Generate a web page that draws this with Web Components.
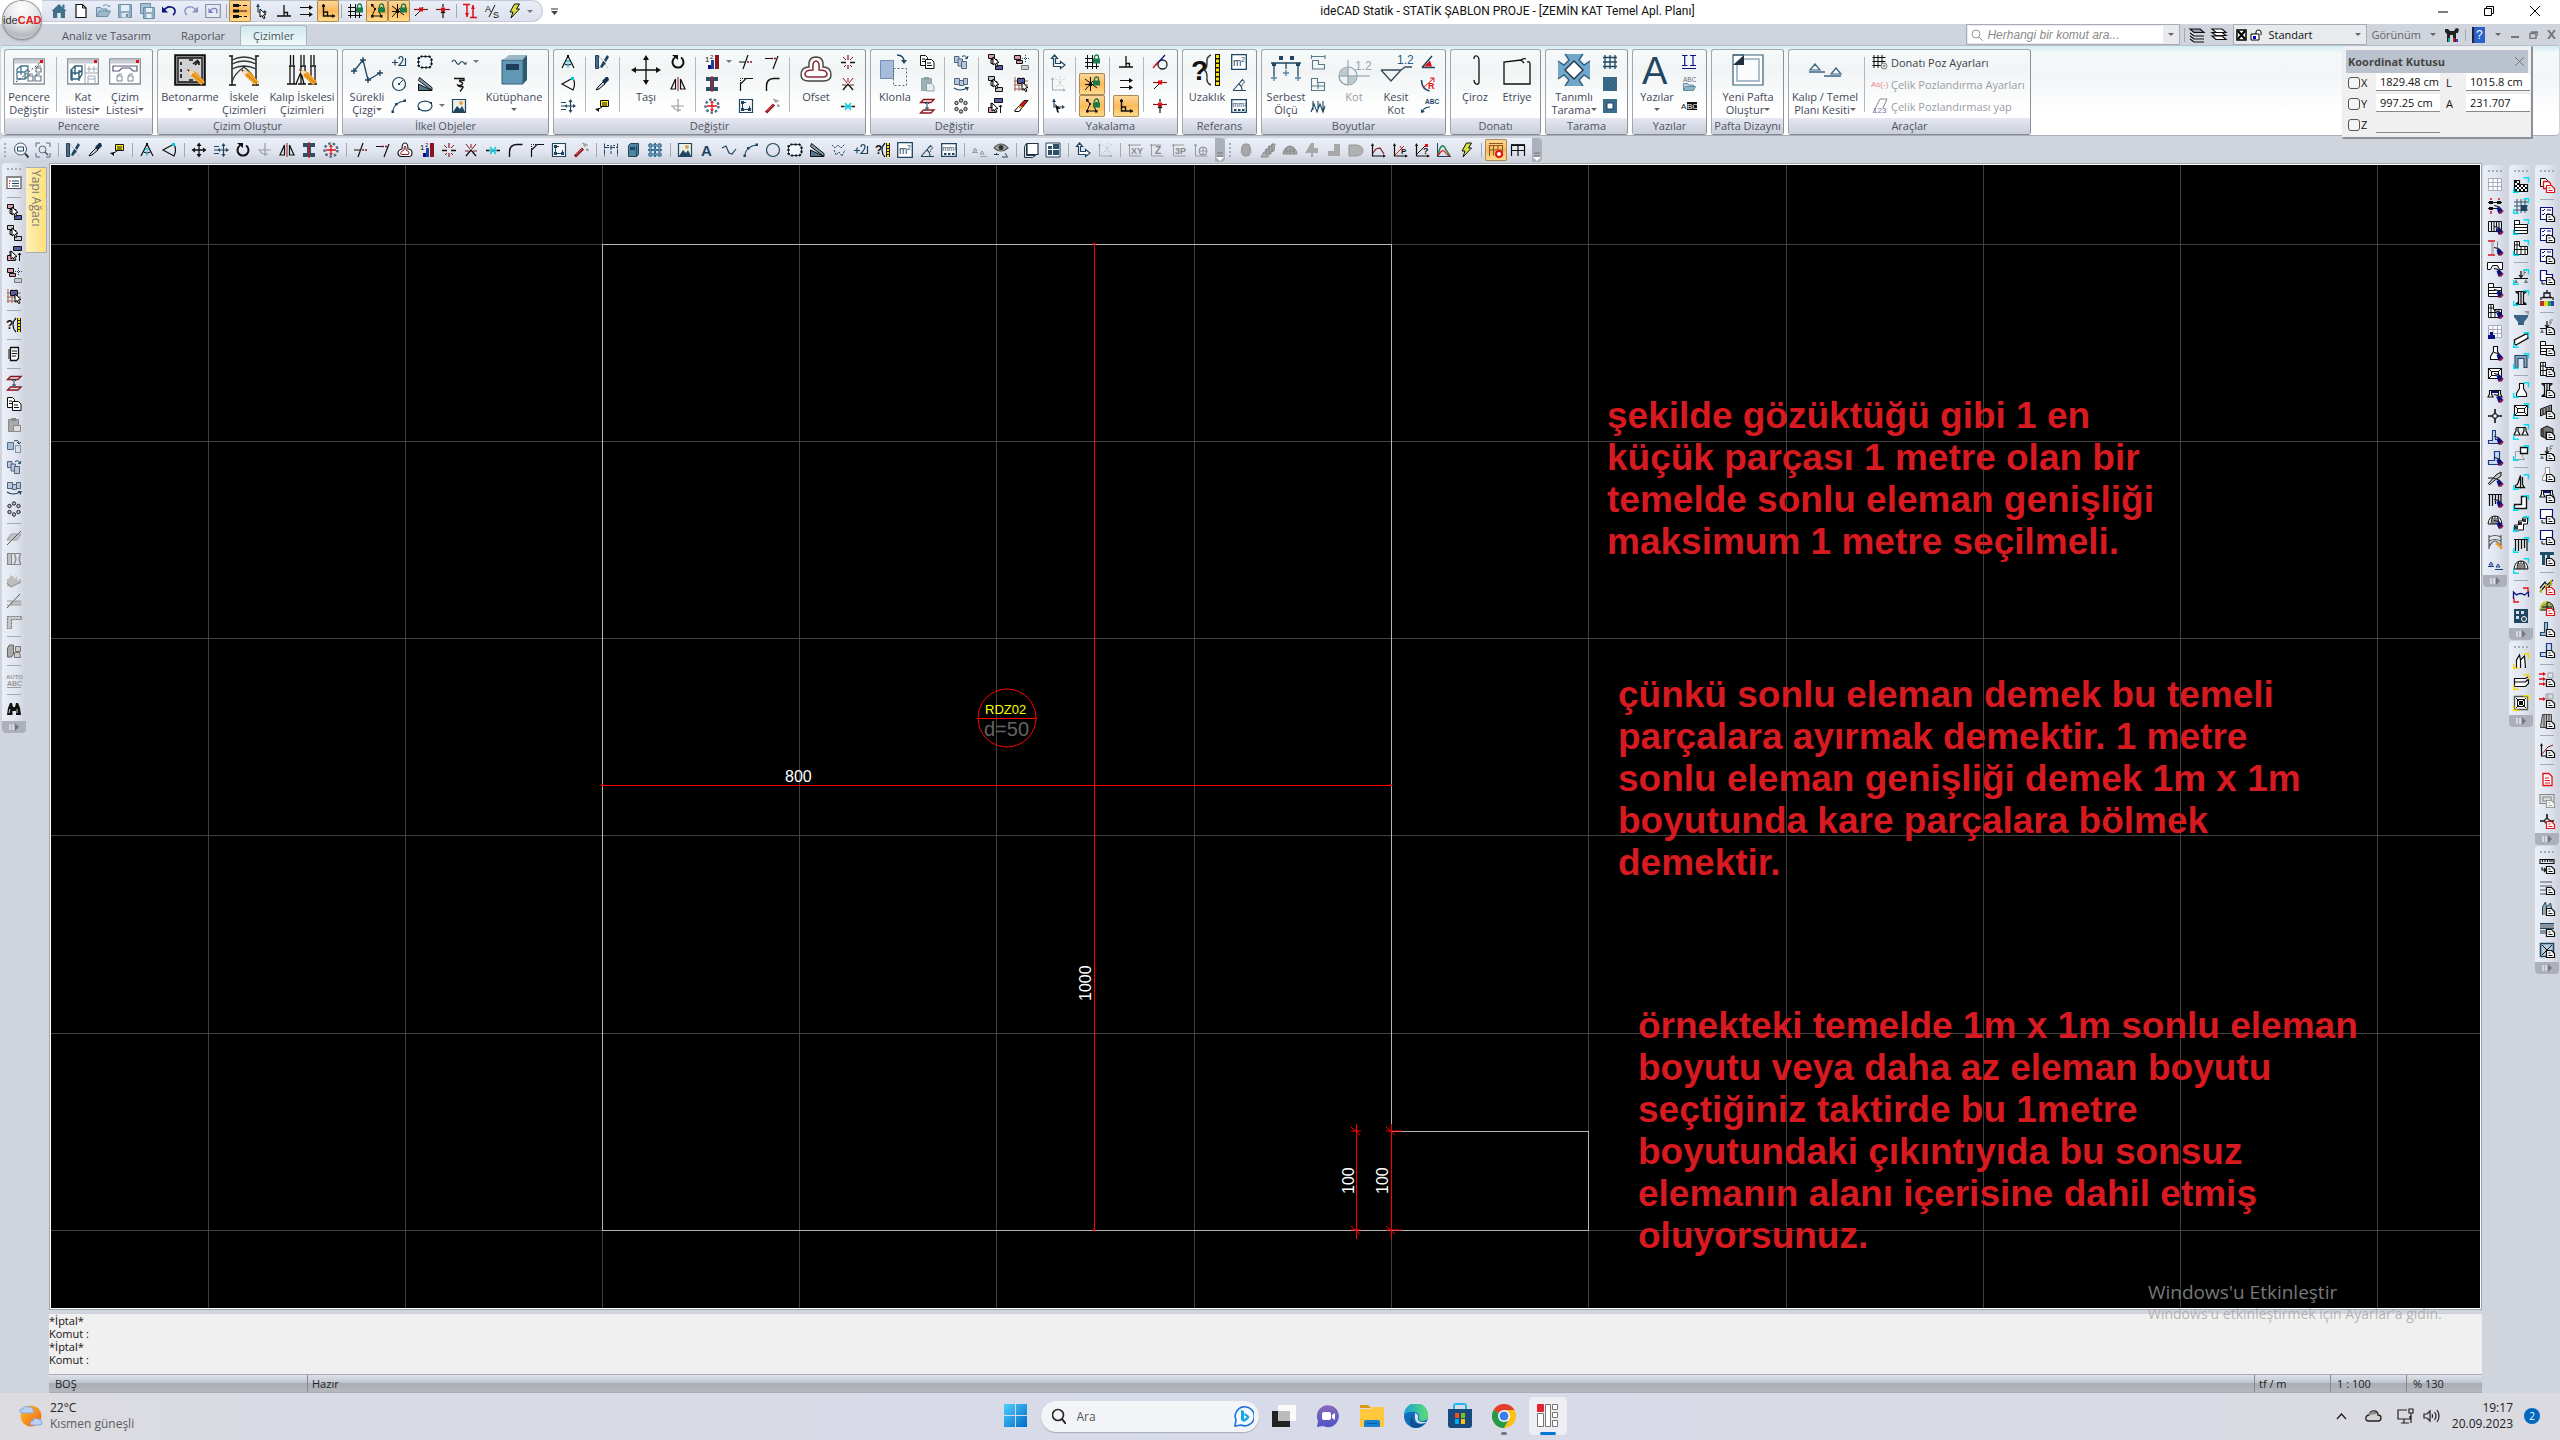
<!DOCTYPE html>
<html lang="tr">
<head>
<meta charset="utf-8">
<title>ideCAD Statik</title>
<style>
html,body{margin:0;height:100%}
body{font:11px/13px "Open Sans","Noto Sans",sans-serif;color:#3c3c46;overflow:hidden;background:#d0d4dd}
</style>
</head>
<body>
<cad-app></cad-app>
<script>
/* ---------- icon drawing helpers ---------- */
const N='#1f4560',K='#101010',R='#e01018',G='#9a9ca0',B='#0a1080',M='#8a1520',C='#00c8dc';
const p=(d,s=K,w=1,f='none')=>`<path d="${d}" stroke="${s}" stroke-width="${w}" fill="${f}"/>`;
const f=(d,c=K)=>`<path d="${d}" fill="${c}"/>`;
const t=(x,y,s,c,str,x2='')=>`<text x="${x}" y="${y}" font-size="${s}" fill="${c}" ${x2}>${str}</text>`;
const dash=(s,a='1 1')=>s.replace('/>',` stroke-dasharray="${a}"/>`);
const doc=(c=K)=>p('M7.500 8.500h5l3 3v4h-8z',c,1.200,'#fff')+p('M9.500 11h2M9.500 13.500h4',c);
const brush=()=>p('M7 7.500l4 1 2 3',K,1.200,'#fff')+f('M9.500 10l3-1.500 4 4.500-2 2.500h-3z',B)+p('M12 15.500l4-3',R,1.200);
const cy=(c='#00e0f0')=>p('M10.500.700h5v4.500M.700 11v4.300h5',c,1.400);
const lock=()=>f('M9 4.500h7v5H9z','#1c7a48')+p('M10.500 5V3a2 2 0 0 1 4 0v2','#1c7a48',1.300);
const selb=(c1,c2)=>p('M1.500.500h6v4h-6z',K,1,c1)+p('M4 5.500h6v4H4z',K,1,c1)+p('M8.500 11.500h7v4h-7z',K,1,c2);
const cur=(x,y)=>`<path d="M${x} ${y}l6 5.500-2.500.500 1.500 3-1.500.500-1.500-3-2 1.500z" fill="#fff" stroke="#000"/>`;
const pencil=f('M13 15l4 7 10 9 4-3-9-10z','#f2a325')+f('M13 15l3.500 7 4-4z','#f6d9b8')+f('M13 15l1.300 2.700 1.400-1.400z','#222')+p('M18 20l11 9','#c77812',1);
const ax=(c=K)=>p('M2.500 2v12h12',c,1.200)+f('M1 4l1.500-3L4 4zM13 12.500l3 1.500-3 1.500z',c);
const brk=(c)=>p('M2.500 2v12h12M1 4l1.500-2L4 4',c);
/* 16-unit icons */
const S={
home:f('M8 1l7.500 7H14v7H9.500v-5h-3v5H2V8H.500z','#41708c')+f('M6.500 10h3v5h-3z','#dfe9ef')+f('M11.500 1.500h2v4h-2z','#41708c'),
new:p('M3 1.500h6.500l3.500 3.500v9.500H3z',K,1.200,'#fff')+p('M9.500 1.500V5H13',K),
open:p('M1.500 13.500V4.500h4l1.500 1.500h5v2','#6a8fa8',1,'#b9ccd9')+p('M1.500 13.500l3-5.500h11l-3 5.500z','#6a8fa8',1,'#9fb9ca')+p('M8 3q4-3 6 1l1-2','#6a8fa8'),
save:p('M1.500 1.500h13v13h-13z','#6a8fa8',1,'#8fadc2')+f('M4 2h8v6H4z','#e5eef4')+f('M4.500 10h7v4.500h-7z','#dbe5ec')+f('M9 11h2v3H9z','#6a8fa8'),
saveall:p('M1.500.500h10v10h-10z','#6a8fa8',1,'#a9c0cf')+p('M4.500 4.500h11v11h-11z','#6a8fa8',1,'#8fadc2')+f('M7 5h6v4H7zM7.500 11h5v4h-5z','#e5eef4'),
undo:p('M2.500 8q3-5 7.500-4t4 5q-.500 2-2 3',B,1.600)+f('M1 3.500v6h6z',B),
redo:p('M13.500 8q-3-5-7.500-4t-4 5q.500 2 2 3','#8f8fc8',1.400)+f('M15 3.500v6H9z','#8f8fc8'),
undobox:p('M.700 1.500h14.600v13H.700z','#8891a8',1.200,'#e6eaf3')+p('M5 8q2-3 5-2.500t1.500 5','#7b7fc0',1.300)+f('M3.500 5v5h5z','#7b7fc0'),
layers:f('M1 1h6v3H1zM1 6.500h6v3H1zM1 12h6v3H1z')+p('M7 2.500h2M11 2.500h4M7 8h8M7 13.500h3M12 13.500h3',K,1.200),
ucs:p('M4 1v8h7',N,1.200)+f('M2 4l2-3 2 3zM10 7l3 2-3 2z',N)+cur(6,6),
perp:p('M8 2v11M1 13h14M8 9.500h3.500V13',K,1.300),
par:p('M2 4.500h11M2 11.500h11',K,1.200)+f('M11 2l4 2.500L11 7zM11 9l4 2.500-4 2.500z'),
ortho:p('M3.500 1v12h11M3.500 9h4v4',K,1.400)+f('M12 11l3.500 2-3.500 2z')+f('M2 2h3v2H2z'),
gridlock:p('M3.500 1v14M8.500 1v14M12.500 9v6M1 4.500h8M1 8.500h14M1 12.500h14',K)+lock(),
polylock:p('M3 2l3 4-3 7h9l-2-5 3-4',K,1)+f('M2 1h2.500v2.500H2zM5 5h2v2H5zM2 12h2.500v2.500H2zM11 12h2.500v2.500H11z')+lock(),
starlock:p('M1 14L9 5M1 3l12 9M6.500 1v14M1 8.500h12',K)+f('M5 7h3v3H5z')+lock(),
snapmid:p('M1 6.500h14',M,1.200)+p('M2 13l6-6 2-3',K)+f('M6 4.500h4v4H6z',R),
snapup:p('M1 6.500h14',M,1.200)+p('M8 15V8M8 1v3M6 10l2-2 2 2',K,1.200)+f('M6 4.500h4v4H6z',R),
dims:p('M5 2v12M11 2v12M1 1.500h7M8 14.500h7',R,1.500)+f('M3 10l2 4 2-4zM9 6l2-4 2 4z',R),
as:t(1,9,9,K,'A')+t(9,15,9,K,'S')+p('M5 14L11 2',K),
bolt:p('M8.500 1h5l-3 5h3L5 15l2-6H4z',K,1,'#d8e040'),
seq:p('M1 8.500h6M4 5.500v6M8 5q0-2.500 2-2.500T12 5q0 2-4 6.500h6.500V4',N,1.200),
circ:`<circle cx="8" cy="8" r="6.500" fill="none" stroke="${N}" stroke-width="1.200"/>`+p('M8 8l4-4',N)+f('M7 7h2v2H7z',N),
circle:`<circle cx="8" cy="8" r="6.500" fill="none" stroke="${N}" stroke-width="1.200"/>`,
arc:p('M1.500 14Q3 4 14 3',N,1.200)+f('M.500 12.500h2.500V15H.500zM4 5h2.500v2.500H4zM12.500 1.500H15V4h-2.500z',N),
selrect:p('M3.500 2.500h9l2 2v7l-2 2h-9l-2-2v-7z',N,1,'#f4f8fc')+dash(p('M3.500 2.500h9l2 2v7l-2 2h-9l-2-2v-7z',K,2.200),'2 2'),
wedge:p('M1.500 8V14.500h13.500z',K,1,'#55788c')+p('M2.500 1.500L15 11.500v3L1.500 4.500z',K,1,'#7f9fb4'),
ellipse:`<ellipse cx="8" cy="8" rx="7" ry="4.800" fill="none" stroke="${N}" stroke-width="1.200"/>`+f('M1 10h2v2H1zM13 4h2v2h-2z',N),
spline:p('M1 8q2-4 4 0t4 1 4 0 2-1',N,1.200),
zigs:p('M3 2.500h10v2q-6-1-4 1 4 1 2 3t-5 0q2 3 5 2t-2 5',K,1.300),
image:p('M1.500 1.500h13v13h-13z',N,1.200,'#eaf1e4')+f('M2 14l4-6 3 3 2-3 3 6z',N)+`<circle cx="10" cy="5" r="2" fill="#e8a050"/>`,
compA:p('M2 14L8 2l6 12M5 10q3 2 6 0',K,1.200)+p('M8 6v8M6 8l2-2 2 2',C)+f('M7 1h2v3H7z'),
rotA:p('M13 2L2 8l11 6q3-6 0-12',K,1.200)+f('M11 1h3v3h-3z',C),
movel:p('M1 4.500h5M1 8h5M1 11.500h5',N)+p('M10.500 2v12M5 8h10',N,1.200)+f('M8.500 4l2-3 2 3zM8.500 12l2 3 2-3zM13 6l3 2-3 2zM7 6L5 8l2 2z',N),
brushx:p('M1.500 1.500h3v13h-3z',N,1,'#4d6b80')+dash(p('M5 2l9 12M14 2L5 14','#999',1))+f('M6 13l3-6 3 2-4 5zM10 6l3-5 2 2-3 5z',N),
dropper:p('M2 14l2-3 5-5 2 2-6 5z',K,1,'#c8d4dc')+f('M8 5l3 3 4-4-1-3h-2z','#1b2f50'),
tag:p('M6.500 2.500h8v6h-8z',K,1,'#ffef20')+p('M8 5h5M8 7h5M8 9l-5 3',K)+f('M1 11l4-1v4z'),
rotate:p('M5 3.500a5.500 5.500 0 1 0 6 0',K,2)+f('M2 1h6v5z'),
mirror:p('M8 1v14',M)+p('M5.500 3v10H1zM10.500 3v10H15z',K,1.200),
rotgrey:p('M8 1v13M1 8h13M3 8q1 5 8 4',G,1.200),
stairs:t(1,8,8,K,'1')+f('M4 11h3v4H4z',B)+f('M7 6h3v9H7z','#2040a0')+f('M11 1h4v14h-4z',M)+t(6,5,6,K,'2'),
ibeam:f('M2 1h12v4h-4v6h4v4H2v-4h4V5H2z','#2d4e64')+p('M8 0v16',R,1.200),
atom:`<circle cx="8" cy="8" r="6.500" fill="none" stroke="#4a6d82" stroke-width="2.400" stroke-dasharray="2.500 2"/>`+p('M8 3v10M3 8h10',R,1.300)+p('M6.500 5L8 3l1.500 2M6.500 11L8 13l1.500-2',R),
trim:p('M1 8h6M5 15l5-14',K,1.200)+dash(p('M9 8h6',M,1.500),'2 1'),
extend:p('M1 4.500h6M9 15l5-13',K,1.200)+dash(p('M7 4.500h6',M,1.500),'2 1'),
cham:p('M2.500 15V8L8 2.500h7',K,1.200)+dash(p('M2.500 7V2.500H7',K,1)),
fillet:p('M2.500 15v-5q0-7 7-7.500h6',K,1.400),
scale:p('M1.500 1.500h13v13h-13z',N,1.200,'#f4f7fa')+p('M4.500 4v7.500H11M4.500 4.500H8M11.500 8v3',N,1)+f('M3 3h3v3H3zM3 10h3v3H3zM10 10h3v3h-3z',N),
wand:p('M2 14.500l8-8',M,3)+p('M3 13l6-6','#f05050')+p('M12 1v4M10 3h5M14 6v3M9 1l2 1M13 8h3','#888'),
burst:p('M1 8.500h5M10 8.500h5',K,1.400)+p('M8 1v5M8 11v4',M,1.200)+p('M3 3l3 3M13 3l-3 3M4 13l2-2M12 13l-2-2',M),
xburst:p('M8 2v4M3 2l4 5M13 2L9 7M2 9h4M10 9h4',M,1)+p('M3 14l5-6 5 6',K,1.300),
cburst:p('M1 8.500h5M10 8.500h5',K,1.400)+p('M5 5l6 7M11 5l-6 7M4 8.500h8',C,1.200),
copy:p('M1.500 1.500h5l2 2v8h-7z',K,1,'#fff')+p('M6.500 5.500h6l2.500 2.500v6.500H6.500z',K,1,'#fff')+p('M3 5h3M3 7.500h3M8 9h4M8 11.500h5',K),
paste:p('M2.500 2.500h10v12h-10z','#8ca3a8',1,'#9db1b6')+p('M7.500 7.500h5l2.500 2.500v5H7.500z','#8ca3a8',1,'#e8eef0')+f('M5 1h5v3H5z','#8ca3a8'),
zlev:p('M4.500 1.500H15l-3 3H1.500z',M,1.300)+p('M4.500 12H15l-3 3H1.500z',M,1.300)+p('M8 4v8M6 6l2-2 2 2M6 10h4',N),
clone:p('M1.500 4.500h6v7h-6z','#50708c',1,'#a9bdd6')+dash(p('M9.500 7.500h5v7h-5z','#345'))+p('M8 3q4-2 5 2M11 4l2 2 2-2',N),
clone1:p('M1.500 2.500h4.500v6H1.500z','#50647c',1,'#b7c6dc')+p('M5 5h4.500v7H5z','#50647c',1,'#b7c6dc')+p('M8.500 7.500h5v7h-5z','#50647c',1,'#b7c6dc')+p('M9 2.500q4-2 5 2M12 4l2 1 1-3',N),
clone2:p('M1.500 2.500h5v6h-5zM6.500 4.500h4v5h-4zM10.500 2.500h4v6h-4z','#50647c',1,'#b7c6dc')+p('M1 12q6 4 13 0M12 11.500l3 0-1 3',N,1.200),
ring:[[8,2.5],[12.500,5],[12.500,11],[8,13.500],[3.500,11],[3.500,5]].map(a=>`<circle cx="${a[0]}" cy="${a[1]}" r="1.700" fill="#bfc6d2" stroke="#222"/>`).join(''),
sel1:selb('#d9a0a8','#5560a0')+cur(6,3),sel2:selb('#ccc','#ccc')+cur(6,3),
sel3:p('M7.500.500h8v4h-8z',K,1,'#5560a0')+p('M1.500 9.500h7v5h-7z',K,1,'#d9a0a8')+p('M4 9V5l3 2M13.500 7v8M12 9l1.500-2L15 9',K)+cur(5,5),
sel4:p('M1.500 1.500h6v4h-6zM3.500 6.500h6v3h-6z',K,1,'#d9a0a8')+p('M8.500 11.500h7v4h-7z','#777',1,'#ccc')+dash(p('M12.500 1v7M9 4.500h7','#246')),
sel5:p('M2 1v14M6 1v14M10 1v14M1 5h14M1 9h14M1 13h12','#a06050')+p('M4.500 2.500h7v5h-7z',K,1,'#5560a0')+cur(9,6),
eraser:p('M2 12.500L11 2.500h4L6 13.500H2z',K,1,R)+p('M2 12.500l3.500-4 3 2L6 13.500H2z',K,1,'#fff')+p('M6 8l3 2','#ffd020',1.500),
axis:p('M4.500 1L7.500 4.500h-2V9.500h5v-2L15 11l-4.500 3.500v-2H3.500V4.500h-2z',N,1.200,'#fff'),
axisg:ax('#9fb0b8')+dash(p('M5 2l10 10M15 2L5 12M10 1v9','#b8c2c6')),
axisc:p('M4 1v8h9',N,1.200)+f('M2 4l2-3 2 3zM12 7l3 2-3 2z',N)+f('M5 6l6 5-3 0 1 4-2-1z'),
tang:`<circle cx="10.500" cy="10.500" r="4.500" fill="none" stroke="#222" stroke-width="1.300"/>`+p('M4 11L13 1',B,1.200)+p('M1 14l5-6',R,1.400),
m2:p('M.700.700h14.600v14.600H.700z',N,1.300,'#fff')+t(2,12,10,N,'m')+t(10,8,7,N,'2'),
angq:p('M2 14.500h13M2 14.500L12 3M8 8q3 2 3 6',N,1.100)+t(9,10,9,N,'?'),
mm2:p('M.700 1.700h14.600v12.600H.700z',N,1.300,'#fff')+t(1.500,8.500,7,N,'mm²')+p('M3 12h2.500M7 12h2.500M11 12h2.500',N,1.800),
dimbox:p('M1 2.500h14M1.500 1v4M15 1v4M2.500 6.500h6v4h6V15h-12z','#5a7a8e',1.100),
dimplus:p('M1.500 2.500h6v4h7v8h-13zM1 10h13M8 7v6','#5a7a8e',1.100),
wave:p('M1 14l3-8 3 8 3-8 3 8 2-6M3 3v9M8 3v9M13 3v9',N,1.100),
angred:p('M2 13.500h13M2 13.500L12 2',N,1.500)+f('M4 12.500l6-6 2 6z',R),
rad:p('M1.500 4q0 9 8 11',N,1.600)+p('M3 12l11-10M10 2h4v4',R)+t(8,13,9,R,'R','font-weight="700"'),
abc:t(5,6,6.500,N,'ABC','font-weight="700"')+p('M2 14q2-5 8-5',N,1.200)+f('M1 11v4l4-1z',N),
hatch:p('M3 1v14M8 1v14M13 1v14M1 3.500h14M1 8h14M1 12.500h14',N,1.300),
solid:f('M1 1h14v14H1z','#3a6c8c')+dash(p('M1 1l14 14M5 1l10 10M9 1l6 6M1 5l10 10M1 9l6 6','#2b5068')),
frame:p('M3 3h10v10H3z','#3a6c8c',4,'#fff')+p('M5 5h6v6H5z',N),
II:p('M1 1.500h5.500M9 1.500H15M3.700 2v9M12 2v9M1 11.500h5.500M9 11.500H15M1 14.500h14','#101088',1.200),
abcf:t(2,6,6.500,'#667','ABC')+p('M2.500 14.500v-7h4l1 1.500h5v1.500','#5f8ba0',1,'#c5d8e2')+p('M2.500 14.500l2-4h10l-2 4z','#5f8ba0',1,'#8fb4c6'),
A3C:f('M6 4h10v8H6z')+t(0,11,8,K,'A')+t(6,11,8,'#fff','BC'),
gridcog:p('M2 1v13M6 1v13M10 1v13M.500 3.500h13M.500 7.500h13M.500 11.500h10',K)+`<circle cx="12" cy="12" r="3" fill="#ddd" stroke="#888"/><circle cx="12" cy="12" r="1" fill="#888"/>`,
asr:t(-1,11,8,'#e88a8a','As(-)'),
p123:p('M3 11L8 1h7l-4 9','#888',1,'#fff')+t(1,15,8,'#7a6ab0','123')+p('M1 15l2-4','#888'),
zoomw:`<circle cx="7.500" cy="7" r="6" fill="#f2f6fa" stroke="#456"/>`+p('M12 11.500l3.500 4','#345',2)+p('M4.500 5h6v4h-6z',N),
zoome:p('M1 5V1h4M11 1h4v4M15 11v4h-4M5 15H1v-4','#667')+`<circle cx="7.500" cy="7.500" r="3.500" fill="none" stroke="#567"/>`+p('M10 10l3 3','#456',1.500),
dimh:dash(p('M1 5.500h14M1.500 1.500v13M8 3v9M14.500 1.500v13M4 3.500h2M10 3.500h2',N,1),'5 1'),
book:p('M3.500 3.500l2-2h8v11l-2 2h-8z',N,1,'#4d87a0')+f('M5 5h5v3H5z',N)+p('M11.500 3.500v11',N),
gridb:p('M3.500 1v14M8 1v14M12.500 1v14M1 3.500h14M1 8h14M1 12.500h14','#1d4d70',2)+p('M3.500 1v14M8 1v14M12.500 1v14M1 3.500h14M1 8h14M1 12.500h14','#6fb0d4',.7),
A:t(2,14,15,N,'A','font-weight="700" font-family="Liberation Serif"'),
zig:p('M1 6l4-2 3 7 3 1 4-5',N,1.200),
squig:dash(p('M1 3l3 3 3-3 3 3 4-4M3 8l2 5 3-3 3 4 3-6',N,1),'2 1'),
meas:t(0,12,12,K,'?','font-weight="700"')+p('M10 1q-3 3-3 7t3 7',K,1.200)+f('M11 1h4v14h-4z','#222')+dash(p('M13 1v14','#ffe800',2),'2 1'),
level:p('M4 6l2 3H2zM11 9l2 3H9z','#8a98a4')+p('M1 10.500h6M9 14.500h7',G),
eye:p('M1 6q7-8 14 0-7 6-14 0','#555',1.200,'#aaa')+`<circle cx="8" cy="5.500" r="2.500" fill="#333"/>`+p('M1 12.500h5M9 15h6M4 11l-2 2M12 11l2 3',N),
pages:p('M4 1.500h11v11H4z','#234',1.200,'#fff')+p('M1.500 4.500l2-3v12h9l-3 2h-8z','#234',1,'#dde4ea'),
win4:p('M1 1h14v14H1z',N,1,'#fff')+f('M8 2h6v5H8zM3 8h4v5H3zM8 8h6v5H8zM3 4h4v3H3z','#2b5068'),
xy:brk(G)+t(4,12,9,'#888','XY','font-weight="700"')+p('M4 3h10',G),
z:brk(G)+t(6,12,10,'#888','Z','font-weight="700"')+p('M4 3h8',G),
p3:brk(G)+t(4,12,9,'#888','3P','font-weight="700"')+p('M4 3h9',G),
globe:brk(G)+`<circle cx="10" cy="9" r="4" fill="none" stroke="#888"/>`+p('M6 9h8M10 5v8',G),
g1:`<rect x="4" y="2" width="8" height="12" rx="3" fill="#a8a8aa" stroke="#999"/>`+p('M4 5l-1 6M12 5l1 6',G),
g2:p('M1 15l3-5h2V7h3V4h3V2h3l-1 7h-3v3H8v3z','#888',1,'#b4b4b6')+p('M6 7v6M9 4v8M12 2v8','#777'),
g3:f('M1 12q1-7 7-8 6 1 7 8z','#aaa')+p('M1 12q1-7 7-8 6 1 7 8zM3 9h10M8 4v8M5 5l-1 7M11 5l1 7','#888'),
g4:f('M7 1h3v5h4v5H9v4H7v-4H1z','#a8a8aa'),g5:f('M8 2h6v12H2v-5h6z','#a8a8aa'),g6:f('M1 3h8q6 1 6 5.500T9 14H1z','#b0b0b2')+p('M1 3h8q6 1 6 5.500T9 14H1z','#999'),
gr1:ax()+p('M3 11l3-4 4-1 4 6',M,1.200),gr2:ax()+p('M3 13L12 4M8 4l2 3',R)+t(9,12,8,K,'P','font-weight="700"'),gr3:ax()+p('M3 12l8-8',K)+f('M11 2h3v3h-3z',R)+t(9,12,9,K,'?','font-weight="700"'),
peaks:p('M1.500 1v14',N)+p('M2 12q4-14 8-4l4 6','#208048',1.500)+p('M2 14q4-8 7-4t5 4',R,1.200)+p('M1 14.500h14',N),
tabr:p('M1.500 14V3.500h13V14M1.500 8h13M5.500 3.500v10M10 3.500V14M1 1.500h14','#8a5a20',1.100)+`<circle cx="11" cy="12" r="3" fill="#fff" stroke="#e01818" stroke-width="2"/>`,
tab:p('M1.500 14V3.500h13V14M1.500 8.500h13M8 3.500V14',K,1.200)+p('M1 3h14',K,1.800),
/* side bar */
list:p('M1 1.500h14v12H1z','#555',1.200,'#fff')+f('M1 1h14v2H1z','#888')+p('M6 6h7M6 8.500h7M6 11h7',N)+p('M3 6h2M3 8.500h1M3 11h1',R),
scroll:p('M4.500 1.500h8v11l-2 2h-6z',K,1.300,'#fff')+p('M3 3v10M6 5h5M6 7.500h5M6 10h4',K),
pasteg:p('M2.500 2.500h10v12h-10z','#888',1,'#aaa')+p('M7.500 8.500h7v6h-7z','#888',1,'#ddd')+f('M5 1h5v3H5z','#888'),
l1:f('M5 4h10l-4 6H1z','#c4c4c4')+p('M1 15L15 1','#555')+p('M5 4h10l-4 6H1z',G),
l2:p('M1.500 2.500h4v11h-4zM8 2.500q4 5 0 11M15 2.500q-4 5 0 11M6 2.500h9M6 13.500h9','#888',1.100,'#c4c4c4'),
l3:f('M1 14V7l3-1V3l4 2v2l3-3v4l4-1v3L4 15z','#bdbdbd')+p('M1 11l4 4 10-5','#888'),
l4:f('M5 8h11v4H3z','#c0c0c0')+p('M1 15L14 1','#555')+p('M1 8h14M1 12h14',G),
l5:dash(p('M1.500 2.500h14v3h-10v9h-4z','#777',1.200,'#c8c8c8'),'2 1'),
l6:p('M1.500 5l2-3h4v9l-2 3h-4z','#666',1,'#aaa')+p('M9.500 3.500h5v5h-5zM8.500 9.500h5l1 5h-6z','#777',1,'#ccc'),
l7:t(0,7,6,'#999','AUTO','font-weight="700"')+t(1,14,7,'#999','ABC','font-weight="700"')+p('M1 15.500h14',G),
bino:f('M2 7l2-5h2l1 4h2l1-4h2l2 5 1 7h-5v-4H6.500v4H1z')+p('M3 12l1-4M11 12V8','#fff',.8),
katl:p('M1 2h10l4 3.500H5z',K,1.200,'#99a')+p('M1 6l4 3h10M1 9l4 3h10M1 12l4 3h10',K,1.200),
katw:p('M1 2h10l4 3.500H5zM1 5.500h4l6 0 4 3H5zM1 9l10 0 4 3.500H5z',K,1.200,'#fff'),
tools:f('M1 2h3l2 2h4l2-3 3 1-1 4h-2v9h-3V8H6v7H3V7L1 5z','#222')+f('M9 11h2v4H9z',R)+f('M4 11h2v4H4z','#0a8')+f('M12 12h2v3h-2z','#24c'),
help:f('M1 0h4v16H1z','#223')+f('M3 0h11v16H3z','#2b62c8')+t(5,12,12,'#fff','?'),
tasis:p('M8 2v12M2 8h12',K,1.300)+f('M5.500 4L8 .500 10.500 4zM5.500 12L8 15.500l2.500-3.500zM4 5.500L.500 8 4 10.500zM12 5.500L15.500 8 12 10.500z'),
cof:p('M5 7q0-6 3-6t3 6q4 0 4 4t-4 3.500H4Q1 14 1 11t4-4z',K,1.100,'#fff')+p('M7 8q0-4 1-4t1 4q3 1 3 3t-2 1.500H5q-2 0-1-2t3-2.500z',M),
};
/* structural base shapes shared by the element and drawing bars */
const base={
grid:p('M1.500 1.500h13v12h-13zM1.500 5.500h13M1.500 9.500h13M6 1.500v12M10.500 1.500v12','#a8acb8',1,'#fff'),
nodes:p('M1 4.500h14M1 10.500h12',K)+f('M2 3h4v3H2zM10 3h4v3h-4zM2 9h4v3H2z')+p('M4 0v2M12 0v2M4 13v3',R,1.500),
bars:p('M1.500 2.500h13v10h-13zM4.500 2v10M7 2v10M9.500 2v10M12 2v10',K),
colr:p('M4.500 1.500v13M10.500 1.500v13','#777')+p('M1 1h7M1 15h7',R,1.300)+f('M4 2h3v12H4z','#bbb'),
beamw:p('M.500 1.500h15v7h-3l-2-4h-5l-2 4h-3z',K,1,'#fff'),
steps:p('M1.500 1.500h5v4h8v9h-13zM1.500 5.500h6M1.500 8.500h13M1.500 11.500h13',K,1,'#fff'),
stepg:p('M1.500 1.500h5v5h8v8h-13zM1.500 5h5M1.500 9.500h13M4 1.500v13M8 6v8M12 6v8',K,1,'#fff'),
gridb:p('M1.500 1.500h13v12h-13zM1.500 5.500h13M1.500 9.500h13M6 1.500v12M10.500 1.500v12','#a8acb8',1,'#fff')+f('M1 15v-4h2V8h3v3h2v4z',B),
pot:p('M6.500 1.500h4v5l3 5v3h-10v-3l3-5z',K,1.100,'#fff'),
potg:p('M6.500 1.500h4v5l3 5v3h-10v-3l3-5z','#999',1.100,'#fff'),
sq:p('M1.500 2.500h13v10h-13zM4.500 5.500h7v4h-7z',K,1.100,'#fff')+p('M1.500 2.500l3 3M14.500 2.500l-3 3M1.500 12.500l3-3M14.500 12.500l-3-3',K),
twin:p('M2 3.500h12M2.500 4v3L1 10h5L4.500 7V4M11.500 4v3L10 10h5l-1.500-3V4',K,1.100,'#fff')+f('M5 4h6v2H5z',B),
cross:p('M8 1v14M1 8h14',K,1.600)+p('M6 6h4v4H6z',K,1,'#fff'),
trip:p('M5.500 1.500h3v9h2l3 4h-12v-3h4z','#1a3c80',1.100,'#c8d8ee'),
Lb:p('M7.500 1.500h5v13h-11v-4h6z','#1a3c80',1.200,'#c8d8ee'),
Lk:p('M8.500 1.500h5v12h-12v-4h7z',K,1.400,'#fff'),
slope:p('M1 13L9 4l5-3v4L8 9l-6 5M1 7h6',K,1,'#ccc'),
comb:p('M1 2.500h14M2.500 2v12M5.500 2v12M8.500 2v10M11.500 2v9M14 2v12',K,1.200),
dome:p('M1 11q1-8 7-8t7 8zM4 11q0-5 2-8M8 3v8M12 11q0-5-2-8M6 11V5M10 11V5',K,1,'#fff'),
truss:p('M2 1v14M14 1v14M2 3q6-3 12 0M2 7q6-3 12 0M2 13q6-12 12 0','#555',1.200)+p('M9 9l6 5','#f0a030',2.500),
lvl:p('M4 7l2 3H2zM11 9l2 3H9z','#1a3c80')+p('M1 11.500h6M8 14.500h8','#1a3c80'),
check:p('M1.500 3.500h5v4h8v7h-13z',K,1.200,'#fff')+dash(p('M2 5h4M2 9h12M2 13h12',K,2),'2 2')+dash(p('M4 7h2M4 11h10',K,2),'2 2'),
slabg:p('M4 1v14M8 1v14M12 1v14M1 4h14M1 8h14M1 12h14','#356',1)+f('M8 7h6v6H8z',N),
load:p('M1 9.500h14M8 2v6M6 6l2 2.500L10 6',K,1.200)+p('M11 6V1h3M11 3.500h2','#777')+f('M3 10l2 4H1zM13 10l2 4h-4z','#777'),
colm:p('M2.500 1.500h11M2.500 14.500h11M5.500 2v12M10.500 2v12M8 2v12M2.500 1.500l3 2.500M13.500 1.500l-3 2.500M2.500 14.500l3-2.500M13.500 14.500l-3-2.500',K,1.200,'#fff'),
funnel:f('M1 4h14v2L11 11v3H5v-3L1 6z','#3a6484')+f('M11 0h5v4z',G),
board:p('M1.500 12V8L13 2h2v4L3 13z',K,1.400,'#fff'),
frm:p('M2 14.500V2.500h12v12h-3v-9H5v9z',N,1.100,'#86a4bc'),
twin2:p('M3 3.500h10M3 4v3l-2 4h6L5 7V4M13 4v3l2 4H9l2-4V4',K,1.200,'#fff'),
twosq:p('M2.500 6.500h7v5l2 3h-10l1-3z','#999')+p('M7.500 2.500h7v6h-7z',K,1.300,'#fff'),
arrw:p('M7.500 14.500v-13l-3 9-2 1v2h9l-2-3V3',K,1.300,'#fff'),
blk:p('M1.500 14v-5h4V5h4V2h5v6h-4v6z',K,1,'#fff')+f('M2 10h3v3H2zM6 6h3v3H6zM10 3h3v3h-3z','#333'),
wav:p('M.500 12V5l3 3q4-3 8 0l4-3v5',B,1.300)+p('M10 1h5v4M1 11v4h5',R,1.300),
chk2:f('M1 1h14v14H1z',N)+f('M3 3h3v3H3zM8 3h3v3H8zM3 8h3v3H3z','#cfe0ee')+`<circle cx="11" cy="11" r="2.500" fill="#345" stroke="#fff"/>`,
roof:p('M3.500 15V7l3-5 1 5v8M7.500 7l4-4 1 12',K,1.200,'#fff'),
slab3:p('M1.500 4.500h11l3-2v7l-3 3h-11zM1.500 8h11l3-3',K,1.200,'#fff'),
sqx:p('M1.500 1.500h13v13h-13z','#555',1.400,'#fff')+p('M3 3l10 10M13 3L3 13M4.500 4.500h7v7h-7z',K)+f('M6 6h4v4H6z'),
list2:p('M1.500 1.500h12v12h-12z',B,1.100,'#fff')+p('M3 4l1 1 2-2M8 4h4M3 8l1 1 2-2M8 8h3',B),
Lz:p('M1.500 1.500h6v4h6v6h-12z',B,1.200,'#fff')+p('M3 12v3h3',K),
rect:p('M1.500 1.500h12v9h-12z',B,1.200,'#fff')+p('M3 12v3h3',K),
rain:p('M3 7.500h10M5 7V3h6v4M8 3V0M2 10V7M14 10V7',K,1.300)+f('M1 11h5v5H1z','#c03020')+f('M5 11h4v5H5z','#e0d030')+f('M9 11h3v5H9z','#30a040')+f('M12 11h3v5h-3z','#2040c0'),
cyl:p('M1.500 6l11-4v6l-11 5z',K,1,'#999')+p('M4 6v5M7 5v5M10 4v5',K),
drum:p('M2 5l6-3 6 3v7l-6 3-6-3z',K,1,'#777')+p('M4 5v8M7 7v7M10 7v7',K),
bridge:f('M1 2h14v3H1zM3 5h3v10H3zM8 5h3v10H8z','#1f5068'),
zroof:p('M1 9l5-6 2 3 6-5M1 13l5-6 2 3 5-6',K,1.200)+p('M2 10v4M7 5v6M12 1v6','#d0c000',1.600),
ydome:p('M1 10q1-8 7-8t7 8z',K,1,'#9ab060')+p('M3 7h10M8 2v8',K)+p('M1 10q1-8 7-8','#e0d020',1.500),
trip2:p('M5.500 1.500h3v9h3v4h-10v-3h4z',N,1.100,'#a9c0d6'),
redarr:p('M0 3h5M0 8h5M0 13h5',R,1.600)+f('M4 1l3 2-3 2zM4 6l3 2-3 2zM4 11l3 2-3 2z',R)+p('M9 2h5v5H9z',G),
redarr1:p('M0 7h5',R,1.600)+f('M4 5l3 2-3 2z',R)+p('M7 2h7v5H7zM9 2v8',G,1,'#ddd'),
strp:p('M3.500 1.500h9v13h-11z','#444',1,'#bbb')+p('M5 2v12M7.500 2v12M10 2v12','#444'),
gax:ax()+p('M3 12L9 5l5-2',M),
sqg:p('M1 2.500h14v9H1zM4 5h8v4H4z','#888',1.100,'#ddd'),
rul:p('M1 1.500h14v4H1zM3.500 2v2M6 2v2M8.500 2v2M11 2v2M13 2v2M3 9v3h4M5 10l2 2-2 2',K,1.100),
lines:p('M1 3h12M1 7h12M1 11h7M1 15h6','#556',1.200),
roofg:p('M3.500 15V7l3-5 1 5v8M7.500 7l4-4 1 5',N,1,'#9aa'),
slabs:f('M1 3h14v4H1zM1 9h8v4H1z','#8793a0')+p('M1 2.500h14M1 7.500h14',N),
sqx2:p('M1.500 1.500h13v13h-13z',N,1.600,'#b8cbdc')+p('M3 3l10 10M13 3L3 13',K),
pg:p('M4 2.500h6l3 3v9H4z',R,1.300,'#fff')+p('M6 7h4M6 9.500h5M6 12h5',R),
pgs:p('M1.500 1.500h5l2 2v6h-7z',K,1,'#fff')+p('M4.500 4.500h5l2 2v5h-7z',R,1.300,'#fff'),
};
const icon16=n=>{const[a,b]=n.split('+');
 if(!b)return S[a]||base[a]||'';
 return base[a]+({c:cy(),y:cy('#f4d800'),b:brush(),d:doc(),r:doc(R),g:doc('#999')}[b]);};
/* 32-unit icons */
const win=(g)=>p('M.700 5h30.600v25H.700z','#8a9098',1.300,'#fff')+f('M1 5.500h30v4H1z','#c9ced4')+f('M27 6h3v3h-3z',R)+g;
const L={
pencere:win(p('M4 15l4-3h7v10l-3 3H4zM4 18h8l3-3M12 18v7M8 12v9','#4a7890',1.300)+dash(p('M3 28L28 8','#333'),'2 2')+p('M15 22h5v5h-5zM22 22h6v5h-6zM23 14h5v4h-5zM15 22l2-2h3M22 22l2-2h3M23 14l2-2h3','#678',1.200)),
kat:win(p('M4 16l4-4h7v8l-3 5H4zM4 19h8l3-3M12 16v11M8 12v9M5 16v11','#34637c',1.400)+p('M18 10v20M18 19h13','#98a0a8')+p('M20 15h10M22 12v6M27 12v6M21 22h7M21 25h7M21 22v7M28 22v7','#9ab')),
cizim:win(p('M4 12h24v5h-4l-3-3h-8l-3 3H4z','#557',1.200)+p('M8 22h5v5H8zM19 22h5v5h-5zM8 22l2-2h3M19 22l2-2h3','#789')),
beton:p('M1.200 1.200h29.600v29.600H1.200z',K,2,'#a9abad')+p('M4 4h24v24H4z',K,1.300,'#d0d2d3')+p('M7 8v3M15 6h4M25 8v3M7 20v4M15 26h4M7 15v3M19 10l5-4M21 11l4-4',K,1.600)+pencil,
iskele:p('M4 2v29M28 2v29M1 31h7M24 31h7M1 2h4M27 2h4',K,1.400)+p('M4 6q12-6 24 0M4 10q12-6 24 0M4 15q12-6 24 0M4 28Q6 20 16 13q9 7 12 15','#333',1.300)+pencil,
kalip:p('M4.500 1v10M7.500 1v10M15 1v10M18 1v10M25 1v10M28 1v10M3 12h6M14 12h6M24 12h6M4 12v18M8 12v18M15 12v18M19 12v6M25 12v18M29 12v18M1 30h10M12 30h8M22 30h9M10 30l5-12 3 12',K,1.300)+pencil,
surekli:p('M3 17L12 6l5 20 12-7',N,1.300)+p('M0 17h6M3 14v6M9 6h6M12 3v6M14 26h6M17 23v6M26 19h6M29 16v6',N,1.300),
kutup:f('M6 5l5-4h18l-4 4z','#9bb8c8')+f('M25 5l4-4v25l-4 4z','#2d5870')+p('M4 6h21v24H4z','#34607a',1,'#5f97b4')+f('M8 10h13v6H8z','#1d3f58'),
tasi:p('M16 4v24M4 16h24',K,1.300)+f('M13 6l3-5 3 5zM13 26l3 5 3-5zM6 13l-5 3 5 3zM26 13l5 3-5 3z'),
ofset:p('M9 13q-1-10 7-10t7 10q8 0 8 8 0 6-8 6H9q-8 0-8-6 0-8 8-8z','#444',1.400,'#fbfbfb')+p('M13 16q-1-9 3-9t3 9q8 0 8 4 0 3-4 3H9q-4 0-4-3 0-4 8-4z','#8a2a38',1.500,'#fff'),
klonla:p('M1.500 6.500h13v18h-13z','#6f8fb4',1,'#a6bcd8')+dash(p('M14.500 14.500h13v17h-13z','#567'),'2 2')+p('M18 1q7 0 7 7',N,1.300)+f('M22 6h6l-3 4z',N),
uzaklik:t(0,26,28,K,'?','font-weight="600"')+p('M20 1q-5 2-4 8 0 6-3 7 3 1 3 7-1 6 4 8','#333',1.400)+f('M24 0h5v32h-5z','#111')+dash(p('M26.500 1v30','#ffe800',3),'3 1.500'),
serbest:p('M1 9h30M4 9v13M16 9v6M28 9v13',N,1.300)+f('M9 2h4v4H9zM20 2h4v4h-4zM2 9h4v3H2zM26 9h4v3h-4z',N)+p('M1 24h6M4 21v6M13 19h6M16 16v6M25 24h6M28 21v6','#5a84a4',1.400),
kot:t(17,16,12,'#98a4ae','1.2')+`<circle cx="10" cy="22" r="9" fill="#eef2f4" stroke="#8a98a2" stroke-width="1.200"/>`+f('M10 22V13a9 9 0 0 0-9 9zM10 22v9a9 9 0 0 0 9-9z','#bccad2')+p('M10 6v25M1 22h31','#8a98a2'),
kesit:t(17,10,12,'#2a5a84','1.2')+p('M1 16h20l4-3h7M1 16l10 11L21 16','#34495c',1.300,'none'),
ciroz:p('M15 5q0-4 3-3 2 1 2 4v22q0 3-3 2-2-1-2-4',K,1.300),
etriye:p('M20 6L3 8v22h26V10q0-3-3-2M20 6q3-2 5-1M20 6l3 3',K,1.300),
tanimli:f('M7 0h18l-4 6 5 5 6-4v18l-6-4-5 5 4 6H7l4-6-5-5-6 4V7l6 4 5-5z','#6fa8cc')+p('M7 0l4 6-5 5-6-4M25 0l-4 6 5 5 6-4M7 32l4-6-5-5-6 4M25 32l-4-6 5-5 6 4','#38607c',1.400)+p('M16 7l9 9-9 9-9-9z','#234',1.400,'#fff'),
yazilar:t(1,30,38,N,'A','font-family="Liberation Serif"'),
pafta:p('M1 1h30v30H1z','#34607a',1.200,'#fff')+p('M5 11v16h22V5H12','#93a8b8',1.500,'#f8fafb')+f('M1 11L12 1v10z','#1f2f40')+p('M1 1h11',N),
plan:p('M6 10l5 6H1zM27 14l5 6H22z','#3a6484',1.200)+p('M0 18h16M15 22h17','#3a6484',1.300),
};
class UiIcon extends HTMLElement{connectedCallback(){const n=this.getAttribute('name'),b=this.hasAttribute('big');
 this.attachShadow({mode:'open'}).innerHTML=`<style>:host{display:block;width:${b?32:16}px;height:${b?32:16}px;flex:none}svg{display:block;overflow:visible;width:100%;height:100%}text{font-family:"Liberation Sans",sans-serif}</style><svg viewBox="0 0 ${b?'32 32':'16 16'}" aria-hidden="true">${b?L[n]:icon16(n)}</svg>`;}}
customElements.define('ui-icon',UiIcon);

/* a strip of tool buttons; "|" is a divider, "*name" is pressed, "v" a menu arrow */
class ToolStrip extends HTMLElement{connectedCallback(){
 const v=this.hasAttribute('vertical');
 const items=this.getAttribute('items').trim().split(/\s+/).map(i=>i==='|'?'<i></i>':i==='v'?'<button class="v" aria-label="Menü"></button>':
 `<button aria-label="${i.replace('*','')}" class="${i[0]==='*'?'on':''}"><ui-icon name="${i.replace('*','')}"></ui-icon></button>`).join('');
 this.attachShadow({mode:'open'}).innerHTML=`<style>
 :host{display:flex;flex-direction:${v?'column':'row'};align-items:center;flex:none}
 button{all:unset;display:grid;place-items:center;box-sizing:border-box;flex:none;width:22px;height:${v?21:22}px}
 .on{background:linear-gradient(#fbd9a0,#fdb95a 50%,#ffdf90);box-shadow:inset 0 0 0 1px #a78a55;border-radius:2px}
 i{flex:none;${v?'width:14px;height:8px;background:linear-gradient(#a4a8b0,#a4a8b0) center/14px 1px no-repeat':'width:var(--div,8px);height:14px;background:linear-gradient(#a4a8b0,#a4a8b0) center/1px 14px no-repeat'}}
 .v{width:10px}.v::after{content:"";border:3px solid transparent;border-top-color:#777;margin-top:3px}
 </style>${items}`;}}
customElements.define('tool-strip',ToolStrip);

/* dockable bar: dotted grip, strip, overflow tab */
class DockBar extends HTMLElement{connectedCallback(){
 const v=this.hasAttribute('vertical');
 this.attachShadow({mode:'open'}).innerHTML=`<style>
 :host{display:flex;flex-direction:${v?'column':'row'};align-items:center;flex:none;border-radius:4px;background:linear-gradient(${v?'90deg':'180deg'},#ebeff8,#e0e4ee 60%,#ccd1dc);${v?'width:24px':'height:24px'}}
 b{flex:none;${v?'width:14px;height:2px;margin:5px 0 2px;background:repeating-linear-gradient(90deg,#a8acb6 0 2px,transparent 2px 4px)':'width:2px;height:14px;margin:0 4px 0 4px;background:repeating-linear-gradient(#a8acb6 0 2px,transparent 2px 4px)'}}
 button{all:unset;flex:none;display:grid;place-items:center;background:#acb0ba;${v?'width:24px;height:12px;border-radius:0 0 4px 4px;margin-top:2px':'width:10px;height:24px;border-radius:0 4px 4px 0;margin-left:3px;align-content:end'}}
 svg{display:block}
 </style><b></b><tool-strip ${v?'vertical':''} items="${this.getAttribute('items')}"></tool-strip><button aria-label="Daha fazla">${v?'<svg width="10" height="8"><path d="M6 0l4 4-4 4z" fill="#777"/><path d="M1 1v6M4 1v6" stroke="#fff"/></svg>':'<svg width="8" height="10"><path d="M1 1h6M1 4h6" stroke="#777"/><path d="M0 5h8L4 9z" fill="#fff"/></svg>'}</button>`;}}
customElements.define('dock-bar',DockBar);

class RibbonGroup extends HTMLElement{connectedCallback(){
 this.attachShadow({mode:'open'}).innerHTML=`<style>
 :host{display:flex;flex-direction:column;box-sizing:border-box;height:86px;flex:none;border:1px solid #a4a8ae;border-right-color:#8e9196;border-bottom-color:#85888e;border-radius:3px;background:linear-gradient(#f5fafb,#f1f4f5 25%,#fff 70%)}
 .c{display:flex;flex:1;padding:1px 2px 0 3px}
 .l{height:16px;text-align:center;line-height:15px;color:#50545e;background:linear-gradient(#e6e9f2,#c9ceda);white-space:nowrap}
 </style><div class="c"><slot></slot></div><div class="l">${this.getAttribute('label')}</div>`;}}
customElements.define('ribbon-group',RibbonGroup);

class RibbonButton extends HTMLElement{connectedCallback(){
 const w=this.getAttribute('w')||42,ls=this.getAttribute('label').split('/n');
 const html=ls.map(s=>`<span>${s.replace(/\^/,'<u></u>')}</span>`).join('');
 this.attachShadow({mode:'open'}).innerHTML=`<style>
 :host{display:block;width:${w}px;flex:none}
 button{all:unset;width:100%;display:flex;flex-direction:column;align-items:center;padding-top:3px}
 ui-icon{margin-bottom:4px} span{white-space:nowrap;line-height:13px;min-height:13px;display:flex;align-items:center;color:${this.hasAttribute('dim')?'#9a9ca4':'#45485a'}}
 u{display:block;border:3px solid transparent;border-top-color:#666;border-bottom:0;margin-left:3px}
 u:only-child{margin:0}
 </style><button>${'<ui-icon big name="'+this.getAttribute('icon')+'"></ui-icon>'}${html}</button>`;}}
customElements.define('ribbon-button',RibbonButton);

class RibbonColumn extends HTMLElement{connectedCallback(){
 const it=this.getAttribute('items').split(' ').map(i=>{const on=i[0]==='*',m=i.endsWith('^'),n=i.replace(/[*^]/g,'');
 return `<button aria-label="${n}" class="${on?'on':''}"><ui-icon name="${n}"></ui-icon>${m?'<u></u>':''}</button>`}).join('');
 this.attachShadow({mode:'open'}).innerHTML=`<style>
 :host{display:flex;flex-direction:column;align-items:center;width:22px;flex:none}
 button{all:unset;position:relative;box-sizing:border-box;width:26px;height:22px;display:grid;place-items:center}
 .on{background:linear-gradient(#fbd9a0,#fdb95a 50%,#ffdf90);box-shadow:inset 0 0 0 1px #a78a55;border-radius:2px}
 u{position:absolute;right:-7px;top:9px;border:3px solid transparent;border-top-color:#777;border-bottom:0}
 </style>${it}`;}}
customElements.define('ribbon-column',RibbonColumn);

class RibbonRule extends HTMLElement{connectedCallback(){this.attachShadow({mode:'open'}).innerHTML=`<style>:host{display:block;width:12px;flex:none;background:linear-gradient(#b4b8be,#b4b8be) center 6px/1px 55px no-repeat}</style>`;}}
customElements.define('ribbon-rule',RibbonRule);
class RibbonSpace extends HTMLElement{connectedCallback(){this.attachShadow({mode:'open'}).innerHTML=`<style>:host{display:block;width:4px;flex:none}:host([wide]){width:12px}</style>`;}}
customElements.define('ribbon-space',RibbonSpace);

class RibbonRows extends HTMLElement{connectedCallback(){this.attachShadow({mode:'open'}).innerHTML=`<style>
 :host{display:flex;flex-direction:column;flex:none;width:158px}
 button{all:unset;display:flex;align-items:center;gap:3px;height:22px;padding-left:2px;white-space:nowrap}
 .d{color:#9a9ca4}</style>
 <button><ui-icon name="gridcog"></ui-icon>Donatı Poz Ayarları</button>
 <button class="d"><ui-icon name="asr"></ui-icon>Çelik Pozlandırma Ayarları</button>
 <button class="d"><ui-icon name="p123"></ui-icon>Çelik Pozlandırması yap</button>`;}}
customElements.define('ribbon-rows',RibbonRows);

class CadRibbon extends HTMLElement{connectedCallback(){
 this.attachShadow({mode:'open'}).innerHTML=`<style>
 :host{display:flex;gap:4px;box-sizing:border-box;height:91px;padding:3px 3px 0;margin:0 1px;border-bottom:1px solid #a9aeb8;border-top:1px solid #b9c0ca;border-radius:0 0 4px 4px;background:linear-gradient(#d3edf3,#f3f8f9 8%,#f4f6f8 40%,#fff 75%)}
 </style>
 <ribbon-group label="Pencere"><ribbon-button icon="pencere" label="Pencere/nDeğiştir"></ribbon-button><ribbon-rule></ribbon-rule><ribbon-button icon="kat" label="Kat/nlistesi^"></ribbon-button><ribbon-button icon="cizim" label="Çizim/nListesi^"></ribbon-button><ribbon-space></ribbon-space></ribbon-group>
 <ribbon-group label="Çizim Oluştur"><ribbon-button w="58" icon="beton" label="Betonarme/n^"></ribbon-button><ribbon-button w="50" icon="iskele" label="İskele/nÇizimleri"></ribbon-button><ribbon-button w="66" icon="kalip" label="Kalıp İskelesi/nÇizimleri"></ribbon-button></ribbon-group>
 <ribbon-group label="İlkel Objeler"><ribbon-button icon="surekli" label="Sürekli/nÇizgi^"></ribbon-button><ribbon-column items="seq circ arc"></ribbon-column><ribbon-space></ribbon-space><ribbon-column items="selrect wedge ellipse^"></ribbon-column><ribbon-space wide></ribbon-space><ribbon-column items="spline^ zigs image"></ribbon-column><ribbon-space wide></ribbon-space><ribbon-button w="64" icon="kutup" label="Kütüphane/n^"></ribbon-button></ribbon-group>
 <ribbon-group label="Değiştir"><ribbon-column items="compA rotA movel"></ribbon-column><ribbon-rule></ribbon-rule><ribbon-column items="brushx dropper tag"></ribbon-column><ribbon-rule></ribbon-rule><ribbon-button icon="tasi" label="Taşı"></ribbon-button><ribbon-column items="rotate mirror rotgrey"></ribbon-column><ribbon-rule></ribbon-rule><ribbon-column items="stairs^ ibeam atom"></ribbon-column><ribbon-space wide></ribbon-space><ribbon-column items="trim cham scale"></ribbon-column><ribbon-space></ribbon-space><ribbon-column items="extend fillet wand"></ribbon-column><ribbon-rule></ribbon-rule><ribbon-button icon="ofset" label="Ofset"></ribbon-button><ribbon-column items="burst xburst cburst"></ribbon-column><ribbon-space></ribbon-space></ribbon-group>
 <ribbon-group label="Değiştir"><ribbon-button icon="klonla" label="Klonla"></ribbon-button><ribbon-column items="copy paste zlev"></ribbon-column><ribbon-rule></ribbon-rule><ribbon-column items="clone1 clone2 ring"></ribbon-column><ribbon-rule></ribbon-rule><ribbon-column items="sel1 sel2 sel3"></ribbon-column><ribbon-space></ribbon-space><ribbon-column items="sel4 sel5 eraser"></ribbon-column><ribbon-space></ribbon-space></ribbon-group>
 <ribbon-group label="Yakalama"><ribbon-column items="axis axisg axisc"></ribbon-column><ribbon-rule></ribbon-rule><ribbon-column items="gridlock *starlock *polylock"></ribbon-column><ribbon-rule></ribbon-rule><ribbon-column items="perp par *ortho"></ribbon-column><ribbon-rule></ribbon-rule><ribbon-column items="tang snapmid snapup"></ribbon-column><ribbon-space></ribbon-space></ribbon-group>
 <ribbon-group label="Referans"><ribbon-button icon="uzaklik" label="Uzaklık"></ribbon-button><ribbon-column items="m2 angq mm2"></ribbon-column><ribbon-space></ribbon-space></ribbon-group>
 <ribbon-group label="Boyutlar"><ribbon-button icon="serbest" label="Serbest/nÖlçü"></ribbon-button><ribbon-column items="dimbox dimplus wave"></ribbon-column><ribbon-space></ribbon-space><ribbon-button dim icon="kot" label="Kot"></ribbon-button><ribbon-button icon="kesit" label="Kesit/nKot"></ribbon-button><ribbon-column items="angred rad abc"></ribbon-column><ribbon-space></ribbon-space></ribbon-group>
 <ribbon-group label="Donatı"><ribbon-button icon="ciroz" label="Çiroz"></ribbon-button><ribbon-button icon="etriye" label="Etriye"></ribbon-button></ribbon-group>
 <ribbon-group label="Tarama"><ribbon-button w="50" icon="tanimli" label="Tanımlı/nTarama^"></ribbon-button><ribbon-column items="hatch solid frame"></ribbon-column><ribbon-space></ribbon-space></ribbon-group>
 <ribbon-group label="Yazılar"><ribbon-button icon="yazilar" label="Yazılar/n^"></ribbon-button><ribbon-column items="II abcf A3C"></ribbon-column><ribbon-space></ribbon-space></ribbon-group>
 <ribbon-group label="Pafta Dizaynı"><ribbon-button w="66" icon="pafta" label="Yeni Pafta/nOluştur^"></ribbon-button></ribbon-group>
 <ribbon-group label="Araçlar"><ribbon-button w="66" icon="plan" label="Kalıp / Temel/nPlanı Kesiti^"></ribbon-button><ribbon-rule></ribbon-rule><ribbon-rows></ribbon-rows></ribbon-group>`;}}
customElements.define('cad-ribbon',CadRibbon);

class CadTitle extends HTMLElement{connectedCallback(){this.attachShadow({mode:'open'}).innerHTML=`<style>
 :host{display:flex;height:24px;background:#fff;color:#111;padding-right:2px}
 .q{display:flex;align-items:center;height:22px;margin-left:42px;padding:0 7px 0 6px;box-sizing:border-box;border:1px solid #c3c9d6;border-left:0;border-radius:0 11px 11px 0;background:linear-gradient(#e9edf6,#dce1ec);--div:5px}
 .more{all:unset;width:22px;display:grid;place-items:center}
 h1{flex:1;margin:0;padding-left:30px;text-align:center;font:400 12px/22px Roboto,"Open Sans",sans-serif}
 .w{all:unset;width:46px;height:22px;display:grid;place-items:center}
 svg{display:block}
 </style><div class="q"><tool-strip items="home new open save saveall undo redo undobox | *layers ucs perp par *ortho | gridlock *polylock *starlock snapmid snapup | dims as bolt v"></tool-strip></div>
 <button class="more" aria-label="Özelleştir"><svg width="7" height="8"><path d="M0 1h7" stroke="#333"/><path d="M0 3h7L3.500 7z" fill="#444"/></svg></button>
 <h1>ideCAD Statik - STATİK ŞABLON PROJE - [ZEMİN KAT Temel Apl. Planı]</h1>
 <button class="w" aria-label="Simge durumuna küçült"><svg width="10" height="10"><path d="M0 6h10" stroke="#000"/></svg></button>
 <button class="w" aria-label="Geri yükle"><svg width="10" height="10"><path d="M.500 2.500h7v7h-7zM2.500 2.500v-2h7v7h-2" stroke="#000" fill="none"/></svg></button>
 <button class="w" aria-label="Kapat"><svg width="10" height="10"><path d="M0 0l10 10M10 0L0 10" stroke="#000"/></svg></button>`;}}
customElements.define('cad-title',CadTitle);

class CadTabs extends HTMLElement{connectedCallback(){this.attachShadow({mode:'open'}).innerHTML=`<style>
 :host{display:flex;height:21px;align-items:stretch;background:#d0d4dd}
 nav{display:flex;flex:1;padding-left:47px}
 nav a{display:flex;align-items:center;justify-content:center;color:#50545e;text-decoration:none;padding:2px 15px 0}
 nav a.on{margin-top:1px;padding:0 12px;border:1px solid #aab4be;border-bottom:0;border-radius:3px 3px 0 0;background:linear-gradient(#cfe9ee,#f0f8fa)}
 .s{display:flex;align-items:center;width:214px;box-sizing:border-box;border:1px solid #a8aeb8;background:#e8eaee;margin-right:2px}
 .s label{display:flex;align-items:center;flex:1;background:#fff;height:17px;margin-left:1px;padding-left:3px;gap:4px}
 input{all:unset;flex:1;width:100px;font:italic 12px "Liberation Sans",sans-serif;color:#555}
 input::placeholder{color:#8a8a8a}
 .a{all:unset;width:16px;display:grid;place-items:center}.a::after{content:"";border:3px solid transparent;border-top-color:#666;border-bottom:0}
 tool-strip{--div:4px}
 .sel{display:flex;align-items:center;gap:4px;width:134px;box-sizing:border-box;border:1px solid #a8aeb8;background:#e8eaee;padding-left:2px;color:#111;margin-left:3px}
 select{all:unset;flex:1;color:#111;padding-left:2px}
 .g{all:unset;padding:0 4px;color:#666;align-self:center}
 svg{display:block;flex:none}
 i{width:1px;height:12px;background:#aaa;align-self:center;margin:0 2px}
 .m{all:unset;width:18px;display:grid;place-items:center}
 </style><nav><a href="#a">Analiz ve Tasarım</a><a href="#r">Raporlar</a><a href="#c" class="on">Çizimler</a></nav>
 <div class="s"><label><svg width="12" height="12"><circle cx="5" cy="5" r="4" fill="none" stroke="#999"/><path d="M8 8l4 4" stroke="#999"/></svg><input type="text" placeholder="Herhangi bir komut ara..." aria-label="Komut ara"></label><button class="a" aria-label="Aç"></button></div>
 <tool-strip items="| katl katw"></tool-strip>
 <div class="sel"><svg width="26" height="12"><path d="M1 1h9v10H1z" fill="#fff" stroke="#000" stroke-width="1.500"/><path d="M2 2l7 8M9 2l-7 8" stroke="#000" stroke-width="2"/><path d="M15 5h8v6h-8zM20 5V3q0-2 2.500-2T25 3v3" fill="#fff" stroke="#000"/><path d="M17 7h3v3h-3z" fill="#00c"/></svg><select aria-label="Stil"><option>Standart</option></select><button class="a" aria-label="Stil listesi"></button></div>
 <button class="g">Görünüm</button><button class="a" aria-label="Görünüm listesi"></button>
 <tool-strip items="tools"></tool-strip><i></i><tool-strip items="help"></tool-strip><button class="a" aria-label="Yardım listesi"></button>
 <button class="m" aria-label="Küçült"><svg width="8" height="8"><path d="M0 6h8" stroke="#777" stroke-width="2"/></svg></button><button class="m" aria-label="Geri"><svg width="9" height="8"><path d="M1 2.500h6v5h-6zM2 1h7v4" stroke="#777" fill="none" stroke-width="1.500"/></svg></button><button class="m" aria-label="Kapat"><svg width="9" height="9"><path d="M1 0l7 9M8 0l-7 9" stroke="#777" stroke-width="2"/></svg></button>`;}}
customElements.define('cad-tabs',CadTabs);

class CadLogo extends HTMLElement{connectedCallback(){this.attachShadow({mode:'open'}).innerHTML=`<style>
 :host{display:grid;place-items:center;position:absolute;left:3px;top:1px;width:38px;height:38px;border-radius:50%;background:radial-gradient(circle at 50% 20%,#fff,#e4e5e8 45%,#b6b9be 75%,#e9eaec);box-shadow:0 0 0 1px #8e9298,0 1px 2px 1px #8888}
 span{font:11px/14px "Liberation Sans",sans-serif;color:#333}b{color:#e02020}
 </style><span>ide<b>CAD</b></span>`;}}
customElements.define('cad-logo',CadLogo);

class CoordBox extends HTMLElement{connectedCallback(){this.attachShadow({mode:'open'}).innerHTML=`<style>
 :host{display:block;position:absolute;right:27px;top:46px;width:191px;height:93px;box-sizing:border-box;padding:3px;background:#f0f0f0;border:1px solid #e4ecf2;border-right:2px solid #8c9098;border-bottom:2px solid #8c9098;color:#111}
 header{display:flex;align-items:center;justify-content:space-between;height:23px;padding:0 4px 0 2px;background:#bac2cd;font-weight:700;color:#444}
 .g{display:grid;grid-template-columns:30px 64px 26px 64px;grid-auto-rows:19px;row-gap:2px}
 label{display:flex;align-items:center}
 input[type=checkbox]{appearance:none;width:12px;height:12px;margin:0 1px 0 2px;border:1px solid #555;border-radius:3px;background:#f4f4f4}
 input[type=text]{all:unset;box-sizing:border-box;width:64px;height:18px;background:#fff;border-bottom:1px solid #888;padding-left:4px;white-space:nowrap}
 input[disabled]{background:#f0f0f0}
 .l{padding-left:6px}
 </style><header><span>Koordinat Kutusu</span><svg width="9" height="9"><path d="M0 0l9 9M9 0L0 9" stroke="#777"/></svg></header>
 <div class="g"><label><input type="checkbox">X</label><input type="text" value="1829.48 cm" aria-label="X"><label class="l" for="l">L</label><input id="l" type="text" value="1015.8 cm">
 <label><input type="checkbox">Y</label><input type="text" value="997.25 cm" aria-label="Y"><label class="l" for="a">A</label><input id="a" type="text" value="231.707">
 <label><input type="checkbox">Z</label><input type="text" disabled aria-label="Z"></div>`;}}
customElements.define('coord-box',CoordBox);

class CadCanvas extends HTMLElement{connectedCallback(){
 const vx=[208,405,602,799,996,1194,1391,1588,1786,1983,2180,2377],hy=[244,441,638,835,1033,1230];
 const tick=(x,y,r)=>`<path d="M${x-5} ${y}h${r}M${x-5} ${y-4}l9 8" stroke="#f00"/>`;
 this.attachShadow({mode:'open'}).innerHTML=`<style>
 :host{display:block;position:relative;flex:1;min-height:0;background:#000;border:1px solid #fff;outline:1px solid #a0a6b0;outline-offset:0;margin:1px;overflow:hidden}
 svg{display:block;position:absolute;inset:0;width:100%;height:100%;font-family:"Liberation Sans",sans-serif}
 p{position:absolute;margin:0;font:700 37px/42px "Liberation Sans",sans-serif;color:#d71920;white-space:nowrap}
 .a{left:1556px;top:230px}.b{left:1567px;top:509px}.c{left:1587px;top:840px}
 </style><svg><g transform="translate(-51 -165)"><g stroke="#404040" shape-rendering="crispEdges">${vx.map(x=>`<path d="M${x} 160V1320"/>`).join('')}${hy.map(y=>`<path d="M40 ${y}H2490"/>`).join('')}</g>
 <path d="M602 244H1391V1131H1588V1230H602z" fill="none" stroke="#b4b4b4" shape-rendering="crispEdges"/>
 <g shape-rendering="crispEdges"><path d="M602 785H1391M1094 244V1230M1356 1124V1239M1391 1124V1239" stroke="#f00"/><path d="M977 718h60" stroke="#f00"/></g>
 ${tick(1356,1131,10)}${tick(1356,1230,10)}${tick(1391,1131,16)}${tick(1391,1230,16)}
 <g fill="none" stroke="#f00"><circle cx="1007" cy="718" r="29"/><circle cx="602" cy="785" r="1"/><circle cx="1391" cy="785" r="1"/><circle cx="1094" cy="244" r="1"/><circle cx="1094" cy="1230" r="1"/></g>
 <text x="785" y="782" font-size="16" fill="#fff">800</text>
 <text transform="translate(1091 1001) rotate(-90)" font-size="16" fill="#fff">1000</text>
 <text transform="translate(1354 1194) rotate(-90)" font-size="16" fill="#fff">100</text>
 <text transform="translate(1388 1194) rotate(-90)" font-size="16" fill="#fff">100</text>
 <text x="985" y="714" font-size="13" fill="#ff0">RDZ02</text><text x="984" y="736" font-size="20" fill="#646464">d=50</text></g></svg>
 <p class="a">şekilde gözüktüğü gibi 1 en<br>küçük parçası 1 metre olan bir<br>temelde sonlu eleman genişliği<br>maksimum 1 metre seçilmeli.</p>
 <p class="b">çünkü sonlu eleman demek bu temeli<br>parçalara ayırmak demektir. 1 metre<br>sonlu eleman genişliği demek 1m x 1m<br>boyutunda kare parçalara bölmek<br>demektir.</p>
 <p class="c">örnekteki temelde 1m x 1m sonlu eleman<br>boyutu veya daha az eleman boyutu<br>seçtiğiniz taktirde bu 1metre<br>boyutundaki çıkıntıyıda bu sonsuz<br>elemanın alanı içerisine dahil etmiş<br>oluyorsunuz.</p>`;}}
customElements.define('cad-canvas',CadCanvas);

class CadConsole extends HTMLElement{connectedCallback(){this.attachShadow({mode:'open'}).innerHTML=`<style>
 :host{display:block;flex:none;background:#f0f0f0;height:60px;margin-top:4px;color:#111;line-height:13px}
 </style><div>*İptal*<br>Komut :<br>*İptal*<br>Komut :</div>`;}}
customElements.define('cad-console',CadConsole);
class CadStatus extends HTMLElement{connectedCallback(){this.attachShadow({mode:'open'}).innerHTML=`<style>
 :host{display:flex;flex:none;height:19px;border-top:1px solid #a8acb4;background:linear-gradient(#dfe2ea,#c0c6d1 45%,#a9adb4 50%,#b6b9be);color:#222;line-height:18px;border-bottom:1px solid #a8acb4;box-sizing:border-box}
 span{box-sizing:border-box;padding-left:6px;border-left:1px solid #888c92;width:76px}
 .a{width:258px;border:0}.b{flex:1;padding-left:4px}.c{padding-left:4px}</style><span class="a">BOŞ</span><span class="b">Hazır</span><span class="c">tf / m</span><span>1 : 100</span><span>% 130</span>`;}}
customElements.define('cad-status',CadStatus);

class SideTab extends HTMLElement{connectedCallback(){this.attachShadow({mode:'open'}).innerHTML=`<style>
 :host{display:block;margin-top:4px;flex:none}
 button{all:unset;box-sizing:border-box;width:21px;height:86px;writing-mode:vertical-rl;padding-top:2px;line-height:18px;border:1px solid #a8acb4;border-left:0;background:linear-gradient(90deg,#fdf0b8,#fddf7c);color:#777;font-size:12px}</style><button>Yapı Ağacı</button>`;}}
customElements.define('side-tab',SideTab);

class ActivateNote extends HTMLElement{connectedCallback(){this.attachShadow({mode:'open'}).innerHTML=`<style>
 :host{display:block;position:absolute;right:115px;bottom:116px;width:297px;color:rgba(160,160,160,.75);white-space:nowrap}
 div{font-size:19px;line-height:24px}p{margin:0;font-size:14px;line-height:20px}</style><div>Windows'u Etkinleştir</div><p>Windows'u etkinleştirmek için Ayarlar'a gidin.</p>`;}}
customElements.define('activate-note',ActivateNote);

class TaskBar extends HTMLElement{connectedCallback(){this.attachShadow({mode:'open'}).innerHTML=`<style>
 :host{display:grid;grid-template-columns:1fr auto 1fr;align-items:center;height:47px;box-sizing:border-box;padding-bottom:1px;flex:none;background:linear-gradient(90deg,#dcdce0,#dadae4 10%,#d7dae8 45%,#d9dae6 75%,#dadae0);color:#222;font-size:12px}
 button{all:unset}
 .w{display:flex;gap:7px;padding-left:19px;align-items:center;line-height:16px}.w small{font-size:12px;color:#5c5c60}
 .m{display:flex;align-items:center;padding-left:3px}
 .t{width:44px;height:40px;display:grid;place-items:center;position:relative}
 .t.on::before{content:"";position:absolute;inset:1px 3px;border-radius:4px;background:#eceef4}
 .t svg{position:relative}
 .t.on::after,.t.dot::after{content:"";position:absolute;bottom:1px;left:14px;width:16px;height:3px;border-radius:2px;background:#0078d4}
 .t.dot::after{left:19px;width:6px;background:#777}
 label{display:flex;align-items:center;width:218px;height:31px;box-sizing:border-box;margin:0 3px;padding:0 5px 0 11px;gap:11px;border-radius:16px;background:#f3f4f8;box-shadow:0 1px 1px #a8aab8}
 input{all:unset;flex:1;width:100px;font-size:12px}input::placeholder{color:#555}
 .r{display:flex;justify-content:flex-end;align-items:center;padding-right:20px}
 .r svg{display:block}.i{width:32px;display:grid;place-items:center}.i.n{width:20px}
 time{text-align:right;line-height:16px;margin:0 11px 0 10px;width:62px;display:block}
 .b{width:16px;height:16px;border-radius:50%;background:#0067c0;color:#fff;text-align:center;font-size:10px;line-height:16px}
 svg{display:block}
 </style>
 <button class="w"><svg width="24" height="24"><defs><linearGradient id="s" x2="1" y2="1"><stop stop-color="#fcc030"/><stop offset="1" stop-color="#f06010"/></linearGradient></defs><circle cx="12" cy="12" r="10.500" fill="url(#s)"/><path d="M2 9q-3-4 2-4 1-4 5-2 5 0 5 3 2 3-2 3z" fill="#b8d0f8" stroke="#88a8e0"/><path d="M12 21q-2-4 2-4 1-4 5-2 5 1 4 4 0 2-2 2z" fill="#b8d0f8" stroke="#88a8e0"/></svg><span>22°C<br><small>Kısmen güneşli</small></span></button>
 <div class="m">
 <button class="t" aria-label="Başlat"><svg width="24" height="24"><defs><linearGradient id="g" x2="1" y2="1"><stop stop-color="#50d0ff"/><stop offset="1" stop-color="#0068c8"/></linearGradient></defs><path d="M0 0h11v11H0zM12 0h11v11H12zM0 12h11v11H0zM12 12h11v11H12z" fill="url(#g)"/></svg></button>
 <label><svg width="14" height="16"><circle cx="6" cy="7" r="5.500" fill="none" stroke="#222" stroke-width="1.600"/><path d="M10 11l4 5" stroke="#222" stroke-width="2"/></svg><input type="text" placeholder="Ara" aria-label="Ara"><svg width="20" height="22"><path d="M1 21l1-6a9.500 9.500 0 1 1 5 5z" fill="#f4f8ff" stroke="#1d74d8" stroke-width="1.600"/><path d="M7 5l3 1v8l3-2-3-2 1-2 4 3q1 2-2 4l-3 2-3-2z" fill="#1ba4e8"/></svg></label>
 <button class="t" aria-label="Görev görünümü"><svg width="24" height="24"><path d="M0 7h18v16H0z" fill="#222"/><path d="M6 1h18v16H6z" fill="#fafafa"/><path d="M6 7h12v10H6z" fill="#bbb"/></svg></button>
 <button class="t" aria-label="Sohbet"><svg width="24" height="24"><defs><linearGradient id="c" x2="0" y2="1"><stop stop-color="#8a6ab8"/><stop offset="1" stop-color="#4f52c8"/></linearGradient></defs><path d="M1 23l1-6a11 11 0 1 1 5 5z" fill="url(#c)"/><rect x="6" y="8" width="9" height="8" rx="2" fill="#fff"/><path d="M16 11l3-2v7l-3-2z" fill="#fff"/></svg></button>
 <button class="t" aria-label="Dosya Gezgini"><svg width="24" height="24"><path d="M0 2q0-1 1-1h7l3 3H0z" fill="#d89810"/><path d="M0 5h10l2-2h11q1 0 1 1v19H0z" fill="#ffc83c"/><path d="M4 23v-5q0-2 2-2h12q2 0 2 2v5z" fill="#1880d0"/><path d="M7 19h10v1H7z" fill="#0a5a9c"/></svg></button>
 <button class="t" aria-label="Edge"><svg width="24" height="24"><defs><linearGradient id="e" x2="1"><stop stop-color="#1a9fd8"/><stop offset="1" stop-color="#5ae070"/></linearGradient></defs><circle cx="12" cy="12" r="12" fill="#0f6cbd"/><path d="M0 11A12 12 0 0 1 24 11q0 6-6 6-4 0-3-3 1-5-4-6Q4 7 0 11z" fill="url(#e)"/><path d="M11 9q-4 2-2 7t9 4l4-2q-4 5-10 6-7-1-6-8 1-5 5-7z" fill="#0c4f94"/><path d="M11 9q4 1 3 5-1 3 4 4l5 0q-5 3-9 1t-3-10z" fill="#d8dbe8"/></svg></button>
 <button class="t" aria-label="Mağaza"><svg width="24" height="26"><path d="M6 7V3q0-2 2-2h8q2 0 2 2v4" fill="none" stroke="#20b8f0" stroke-width="2"/><path d="M0 6h24v16q0 3-3 3H3q-3 0-3-3z" fill="#184a80"/><path d="M7 10h4v5H7z" fill="#f05020"/><path d="M13 10h4v5h-4z" fill="#80c010"/><path d="M7 16h4v5H7z" fill="#00a8f0"/><path d="M13 16h4v5h-4z" fill="#ffc010"/></svg></button>
 <button class="t dot" aria-label="Chrome"><svg width="24" height="24"><circle cx="12" cy="12" r="12" fill="#fbc116"/><path d="M12 12L1.600 6A12 12 0 0 1 22.400 6H12z" fill="#e33b2e"/><path d="M1.600 6A12 12 0 0 0 12 24l5-9-5-3z" fill="#269a48"/><circle cx="12" cy="12" r="6" fill="#fff"/><circle cx="12" cy="12" r="4.500" fill="#3a7cec"/></svg></button>
 <button class="t on" aria-label="ideCAD"><svg width="22" height="24" fill="#fff" stroke="#777"><path d="M.500.500h6v7h-6z" fill="#e82030" stroke="#e82030"/><path d="M.500 9.500h6v13h-6zM8.500.500h5v22h-5zM15.500.500h5v5h-5zM15.500 8.500h5v5h-5zM15.500 16.500h5v6h-5z"/></svg></button>
 </div>
 <div class="r">
 <button class="i" aria-label="Gizli simgeler"><svg width="11" height="7"><path d="M1 6l4.500-5L10 6" fill="none" stroke="#222" stroke-width="1.400"/></svg></button>
 <button class="i" aria-label="OneDrive"><svg width="17" height="12"><path d="M4 11q-4 0-3-4 1-2 3-2 1-4 5-4t4 4q3 0 3 3t-3 3z" fill="#d4d4d4" stroke="#222" stroke-width="1.300"/><path d="M3 5q2-4 6-4 3 1 3 3z" fill="#888"/></svg></button>
 <button class="i" aria-label="Ağ"><svg width="17" height="16" fill="none" stroke="#222" stroke-width="1.200"><path d="M10 2H1v9h12V8M4 15h8M7 11v4M12 1h4v4h-4zM14 5v10"/></svg></button>
 <button class="i n" aria-label="Ses"><svg width="17" height="14" fill="none" stroke="#222" stroke-width="1.200"><path d="M1 5h3l3-3v10L4 9H1zM9 5q1 2 0 4M11.500 3q3 4 0 8M14 1q4 6 0 12"/></svg></button>
 <time>19:17<br>20.09.2023</time><span class="b">2</span></div>`;}}
customElements.define('task-bar',TaskBar);

class CadApp extends HTMLElement{connectedCallback(){this.attachShadow({mode:'open'}).innerHTML=`<style>
 :host{display:flex;flex-direction:column;height:100vh;position:relative}
 .tools{display:flex;height:27px;box-sizing:border-box;padding:2px 0 0;flex:none}
 .main{display:flex;flex:1;min-height:0}
 .left{display:flex;width:49px;flex:none;align-items:flex-start;padding-left:2px;box-sizing:border-box}
 .mid{flex:1;min-width:0;display:flex;flex-direction:column}
 .right{display:flex;gap:2px;width:78px;flex:none;align-items:flex-start;padding:2px 0 0 1px;box-sizing:border-box}
 .right div{display:flex;flex-direction:column;gap:1px}
 </style>
 <cad-title></cad-title><cad-tabs></cad-tabs><cad-logo></cad-logo><cad-ribbon></cad-ribbon>
 <div class="tools"><dock-bar items="zoomw zoome | brushx dropper tag | compA rotA | tasis movel rotate rotgrey mirror ibeam atom | trim extend cof stairs burst xburst cburst fillet cham scale wand | dimh book gridb | image A zig arc circle selrect wedge squig seq meas m2 angq mm2 | level eye | pages win4 | axis axisg | xy z p3 globe"></dock-bar><dock-bar items="g1 g2 g3 g4 g5 g6 gr1 gr2 gr3 peaks bolt | *tabr tab"></dock-bar></div>
 <div class="main"><div class="left"><dock-bar vertical items="list | sel1 sel2 sel3 sel4 sel5 | meas | scroll | zlev copy pasteg clone clone1 clone2 ring | l1 l2 l3 l4 l5 | l6 | l7 | bino"></dock-bar><side-tab></side-tab></div>
 <div class="mid"><cad-canvas></cad-canvas><cad-console></cad-console><cad-status></cad-status></div>
 <div class="right"><div><dock-bar vertical items="grid nodes+b bars+b colr+b beamw+b steps+b stepg+b gridb pot+b sq+b twin+b cross trip+b Lb+b slope+b comb+b dome+b truss lvl"></dock-bar></div>
 <div><dock-bar vertical items="check+c slabg+c steps+c stepg+c | load+c colm+c funnel board+c frm+c | pot+c sq+c twin2+c twosq+c | arrw+c Lk+c blk+c comb+c dome+c | wav chk2"></dock-bar><dock-bar vertical items="roof+y slab3+y sqx+y"></dock-bar></div>
 <div><dock-bar vertical items="pgs+r | list2+d list2+d list2+d Lz+d rain | load+d steps+d stepg+d colm+d cyl+d drum+d load+d potg+d twin+d rect+d rect+d bridge+d | zroof+r ydome+r trip2+d Lb+d | redarr+d redarr1+d strp+d | gax+d | pg sqg+g cross+r"></dock-bar><dock-bar vertical items="rul+d lines+d roofg+d slabs+d sqx2+d"></dock-bar></div></div></div>
 <task-bar></task-bar><coord-box></coord-box><activate-note></activate-note>`;}}
/* the plain base grid with a corner footing wins over the toolbar grid of the same name in the side bar */
S.gridf=base.gridb;
customElements.define('cad-app',CadApp);
document.querySelector('cad-app').shadowRoot.querySelectorAll('.right dock-bar').forEach(d=>{
 d.shadowRoot.querySelectorAll('tool-strip').forEach(s=>s.shadowRoot.querySelectorAll('ui-icon[name="gridb"]').forEach(i=>{i.shadowRoot.querySelector('svg').innerHTML=base.gridb;}));});
</script>
</body>
</html>
